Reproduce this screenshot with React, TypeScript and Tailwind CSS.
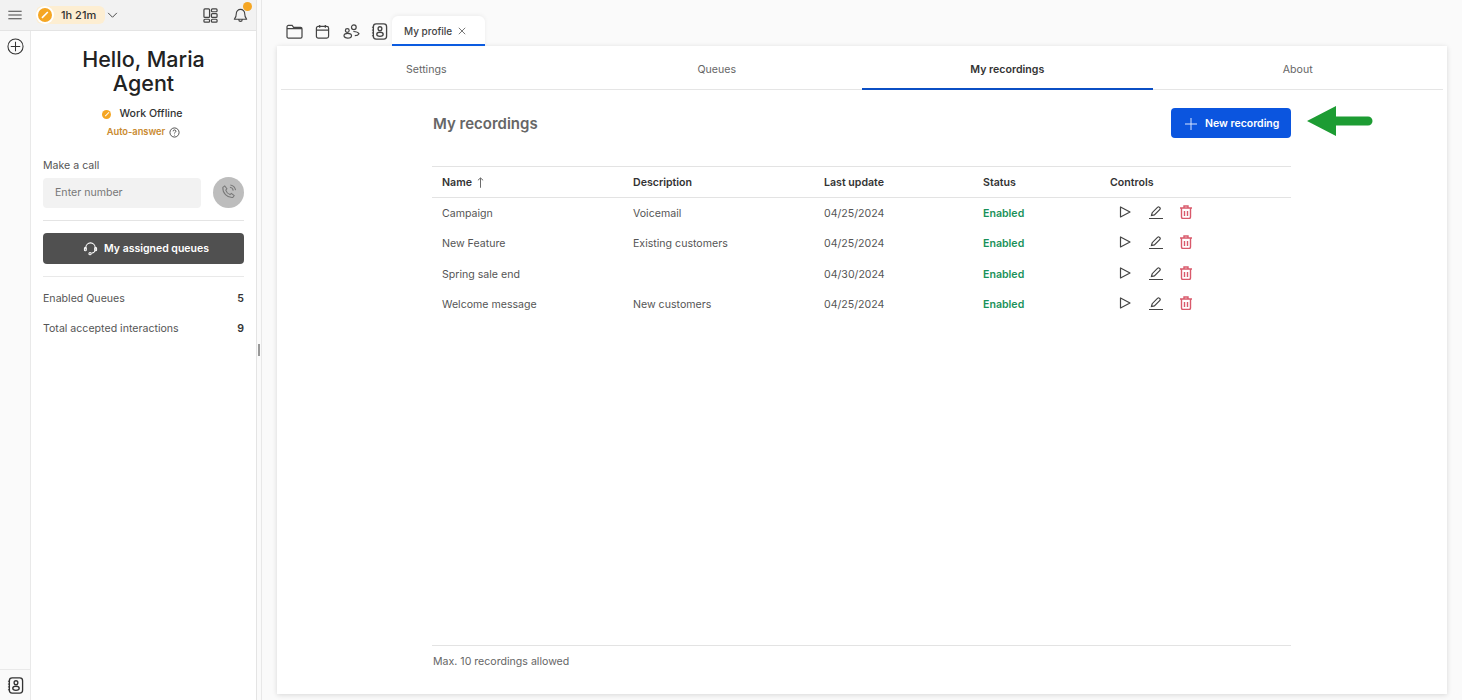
import { useState } from "react";

const ROWS = [
  { name: "Campaign", description: "Voicemail", updated: "04/25/2024" },
  { name: "New Feature", description: "Existing customers", updated: "04/25/2024" },
  { name: "Spring sale end", description: "", updated: "04/30/2024" },
  { name: "Welcome message", description: "New customers", updated: "04/25/2024" },
];

const TABS = ["Settings", "Queues", "My recordings", "About"];

function Contact({ className = "" }: { className?: string }) {
  return (
    <svg viewBox="0 0 18 18" fill="none" stroke="currentColor" strokeWidth="1.4" className={className}>
      <rect x="2.5" y="1" width="14" height="16" rx="3" />
      <circle cx="9.5" cy="6" r="2" />
      <ellipse cx="9.5" cy="12" rx="3.4" ry="2.2" />
      <path d="M1 4.5h2M1 7.5h2M1 10.5h2M1 13.5h2" strokeWidth="1" />
    </svg>
  );
}

function StatusDot({ size }: { size: string }) {
  return (
    <span className={`flex items-center justify-center rounded-full bg-[#f5a623] ${size}`}>
      <svg viewBox="0 0 10 10" className="h-[70%] w-[70%]">
        <path d="M2 8 8 2" stroke="#fff" strokeWidth="1.6" />
      </svg>
    </span>
  );
}

function Sidebar() {
  return (
    <aside className="flex h-full w-[257px] shrink-0 flex-col border-r border-[#e4e4e4] bg-white font-['Inter',sans-serif]">
      <div className="flex h-[31px] shrink-0 items-center border-b border-[#e4e4e4] bg-[#f2f2f2] pl-[8px]">
        <svg viewBox="0 0 16 12" className="h-[10px] w-[14px]" fill="none" stroke="#444" strokeWidth="1.2">
          <path d="M0 1.5h16M0 6h16M0 10.5h16" />
        </svg>
        <div className="ml-[14px] flex h-[18px] w-[69px] items-center rounded-[6px] bg-[#fdeed2]">
          <span className="flex h-[18px] w-[18px] items-center justify-center rounded-full bg-white">
            <StatusDot size="h-[14px] w-[14px]" />
          </span>
          <span className="ml-[7px] text-[11px] font-medium text-[#333]">1h 21m</span>
        </div>
        <svg viewBox="0 0 12 8" className="ml-[2px] h-[7px] w-[11px]" fill="none" stroke="#444" strokeWidth="1.1">
          <path d="M1 1l5 5 5-5" />
        </svg>
        <svg viewBox="0 0 16 16" className="ml-[85px] h-[15px] w-[15px]" fill="none" stroke="#444" strokeWidth="1.3">
          <rect x="1" y="1" width="6" height="9" rx="1" />
          <rect x="1" y="12" width="6" height="3" rx="1" />
          <rect x="9" y="1" width="6" height="3" rx="1" />
          <rect x="9" y="6" width="6" height="4" rx="1" />
          <rect x="9" y="12" width="6" height="3" rx="1" />
        </svg>
        <div className="relative ml-[15px]">
          <svg viewBox="0 0 16 16" className="h-[15px] w-[15px]" fill="none" stroke="#444" strokeWidth="1.2">
            <path d="M8 1.5a4.5 4.5 0 0 0-4.5 4.5c0 4-2 5.5-2 6h13c0-.5-2-2-2-6A4.5 4.5 0 0 0 8 1.5zM6.2 12.5a1.8 1.8 0 0 0 3.6 0" />
          </svg>
          <span className="absolute -right-[4px] -top-[6px] h-[9px] w-[9px] rounded-full bg-[#f5a623]" />
        </div>
      </div>

      <div className="flex min-h-0 flex-1">
        <div className="flex w-[31px] shrink-0 flex-col items-center justify-between border-r border-[#e9e9e9] bg-[#fafafa] pt-[7px]">
          <svg viewBox="0 0 18 18" className="h-[17px] w-[17px]" fill="none" stroke="#333" strokeWidth="1.1">
            <circle cx="9" cy="9" r="8" />
            <path d="M9 4v10M4 9h10" />
          </svg>
          <div className="flex h-[31px] w-full items-center justify-center border-t border-[#e9e9e9]">
            <Contact className="h-[17px] w-[17px] text-[#333]" />
          </div>
        </div>

        <div className="flex-1 px-[12px]">
          <h1 className="mt-[16px] text-center text-[21.5px] leading-[24px] font-medium text-[#222]">
            Hello, Maria
            <br />
            Agent
          </h1>
          <div className="mt-[11px] flex items-center justify-center gap-[8px] pr-[2px]">
            <StatusDot size="h-[9px] w-[9px]" />
            <span className="text-[10.6px] leading-[16px] font-medium text-[#333]">Work Offline</span>
          </div>
          <div className="mt-[3px] flex items-center justify-center gap-[4px]">
            <span className="text-[9.3px] leading-[14px] font-semibold text-[#c98a2f]">Auto-answer</span>
            <svg viewBox="0 0 12 12" className="h-[11px] w-[11px]" fill="none" stroke="#444" strokeWidth="1">
              <circle cx="6" cy="6" r="5" />
              <path d="M4.5 4.7a1.5 1.5 0 1 1 2.2 1.3c-.5.3-.7.5-.7 1M6 8.5v.8" />
            </svg>
          </div>

          <p className="mt-[19px] text-[10.6px] leading-[16px] text-[#555]">Make a call</p>
          <div className="mt-[3px] flex items-center justify-between">
            <div className="flex h-[30px] w-[158px] items-center rounded-[4px] bg-[#f2f2f2] pl-[12px] text-[10.6px] text-[#777]">
              Enter number
            </div>
            <span className="flex h-[31px] w-[31px] items-center justify-center rounded-full bg-[#bdbdbd]">
              <svg viewBox="0 0 18 18" className="h-[17px] w-[17px]" fill="none" stroke="#777" strokeWidth="1.1">
                <path d="M3 3.5 5 2l2.3 3-1.2 1.4c.6 2 2.500 4 4.500 4.800l1.400-1.200 3 2.300-1.500 2c-6 .5-11-5-10.500-10.800zM10.500 3.500a4 4 0 0 1 3.500 3.500M11 1a7 7 0 0 1 5.500 5.500" />
              </svg>
            </span>
          </div>
          <div className="mt-[12px] h-px bg-[#e4e4e4]" />
          <button className="mt-[12px] flex h-[31px] w-full items-center justify-center gap-[6px] rounded-[4px] bg-[#505050] pl-[5px] text-[10.5px] font-semibold text-white">
            <svg viewBox="0 0 16 16" className="h-[15px] w-[15px]" fill="none" stroke="#fff" strokeWidth="1.1">
              <path d="M3 9V7a5 5 0 0 1 10 0v2M13 9c0 2-1 3.500-4 4" />
              <rect x="1.500" y="7" width="2" height="3.500" rx="1" />
              <rect x="12.500" y="7" width="2" height="3.500" rx="1" />
              <circle cx="7.500" cy="13.500" r="1.200" />
            </svg>
            My assigned queues
          </button>
          <div className="mt-[12px] h-px bg-[#e9e9e9]" />
          <div className="mt-[14px] flex h-[16px] items-center justify-between text-[10.6px] text-[#555]">
            <span>Enabled Queues</span>
            <span className="font-semibold text-[#333]">5</span>
          </div>
          <div className="mt-[14px] flex h-[16px] items-center justify-between text-[10.6px] text-[#555]">
            <span>Total accepted interactions</span>
            <span className="font-semibold text-[#333]">9</span>
          </div>
        </div>
      </div>
    </aside>
  );
}

function MainPanel() {
  const [tab] = useState("My recordings");
  return (
    <main className="flex min-w-0 flex-1 flex-col px-[15px]">
      <div className="flex h-[46px] shrink-0 items-end">
        <div className="flex h-[29px] w-[115px] items-center gap-[12px] self-end pl-[9px] text-[#444]">
          <svg viewBox="0 0 18 16" className="h-[15px] w-[17px] shrink-0" fill="none" stroke="currentColor" strokeWidth="1.3">
            <path d="M1 3a1.500 1.500 0 0 1 1.500-1.500h4L8 3.500h7.500A1.500 1.500 0 0 1 17 5v8.500a1.500 1.500 0 0 1-1.500 1.500h-13A1.500 1.500 0 0 1 1 13.500zM1 5h16" />
          </svg>
          <svg viewBox="0 0 16 16" className="h-[15px] w-[15px] shrink-0" fill="none" stroke="currentColor" strokeWidth="1.3">
            <rect x="1.500" y="2.500" width="13" height="12.500" rx="2" />
            <path d="M1.500 6.500h13M5 1v3M11 1v3" />
          </svg>
          <svg viewBox="0 0 18 16" className="ml-[1px] h-[15px] w-[17px] shrink-0" fill="none" stroke="currentColor" strokeWidth="1.3">
            <circle cx="11.500" cy="3.500" r="2.500" />
            <circle cx="4.500" cy="7" r="2" />
            <ellipse cx="5" cy="12.500" rx="4" ry="2.500" />
            <path d="M11 8c2 0 5 .5 6 2.500-.5 1-2 2-4.500 2" />
          </svg>
          <Contact className="-ml-[1px] h-[17px] w-[17px] shrink-0" />
        </div>
        <div className="relative z-10 flex h-[30px] w-[93px] items-center rounded-t-[6px] border-b-2 border-[#0b5be0] bg-white pt-[2px] pl-[12px] text-[10px] font-medium text-[#444] shadow-[0_-1px_4px_rgba(0,0,0,0.06)]">
          My profile
          <svg viewBox="0 0 10 10" className="ml-[6px] h-[8px] w-[8px]" fill="none" stroke="#555" strokeWidth="1">
            <path d="M1 1l8 8M9 1l-8 8" />
          </svg>
        </div>
      </div>

      <section className="mb-[6px] flex min-h-0 flex-1 flex-col bg-white px-[4px] shadow-[0_1px_5px_rgba(0,0,0,0.14)]">
        <div className="grid h-[44px] shrink-0 grid-cols-4 border-b border-[#e5e5e5] text-[10.6px]">
          {TABS.map((t) => (
            <div
              key={t}
              className={
                t === tab
                  ? "-mb-px flex items-center justify-center border-b-2 border-[#0b4fc4] pt-[5px] font-semibold text-[#333]"
                  : "flex items-center justify-center pt-[5px] text-[#666]"
              }
            >
              {t}
            </div>
          ))}
        </div>

        <div className="ml-[151px] flex min-h-0 w-[859px] flex-1 flex-col">
          <div className="mt-[18px] flex h-[30px] shrink-0 items-center justify-between">
            <h2 className="pt-[3px] pl-[1px] text-[15px] font-semibold text-[#666]">My recordings</h2>
            <button className="flex h-[30px] w-[120px] items-center gap-[8px] rounded-[4px] bg-[#0b55df] pt-[1px] pl-[14px] text-[10.5px] font-semibold text-white">
              <svg viewBox="0 0 12 12" className="h-[12px] w-[12px]" fill="none" stroke="#dbe6ff" strokeWidth="1">
                <path d="M6 0v12M0 6h12" />
              </svg>
              New recording
            </button>
          </div>

          <table className="mt-[28px] w-full table-fixed text-left text-[10.6px]">
            <thead>
              <tr className="h-[31px] border-y border-[#e3e3e3] font-semibold text-[#333]">
                <th className="w-[191px] pt-[2px] pl-[10px] font-semibold">
                  <span className="flex items-center gap-[5px]">
                    Name
                    <svg viewBox="0 0 8 12" className="h-[11px] w-[7px]" fill="none" stroke="#444" strokeWidth="0.9">
                      <path d="M4 12V1M1 3.500 4 .8l3 2.700" />
                    </svg>
                  </span>
                </th>
                <th className="w-[191px] pt-[2px] pl-[10px] font-semibold">Description</th>
                <th className="w-[159px] pt-[2px] pl-[10px] font-semibold">Last update</th>
                <th className="w-[127px] pt-[2px] pl-[10px] font-semibold">Status</th>
                <th className="pt-[2px] pl-[10px] font-semibold">Controls</th>
              </tr>
            </thead>
            <tbody className="text-[#555]">
              {ROWS.map((r) => (
                <tr key={r.name} className="h-[30.500px]">
                  <td className="pt-[2px] pl-[10px]">{r.name}</td>
                  <td className="pt-[2px] pl-[10px]">{r.description}</td>
                  <td className="pt-[2px] pl-[10px]">{r.updated}</td>
                  <td className="pt-[2px] pl-[10px] font-semibold text-[#19915a]">Enabled</td>
                  <td className="pl-[10px]">
                    <div className="-mt-[2px] flex items-center gap-[16.500px] pl-[8px]">
                      <svg viewBox="0 0 14 14" className="h-[14px] w-[14px]" fill="none" stroke="#444" strokeWidth="1.2">
                        <path d="M2.500 2v10l9.500-5z" strokeLinejoin="round" />
                      </svg>
                      <svg viewBox="0 0 14 14" className="h-[14px] w-[14px]" fill="none" stroke="#444" strokeWidth="1.2">
                        <path d="M2.500 10.500l.7-2.800 5.500-5.500a1.100 1.100 0 0 1 1.600 0l.6.600a1.100 1.100 0 0 1 0 1.600l-5.500 5.500zM0 13.500h14" />
                      </svg>
                      <svg viewBox="0 0 14 14" className="h-[14px] w-[14px]" fill="none" stroke="#d9596b" strokeWidth="1.4">
                        <path d="M1 3h12M2.500 3v9a1.500 1.500 0 0 0 1.500 1.500h6A1.500 1.500 0 0 0 11.500 12V3M5 3V1h4v2M5.500 6v5M8.500 6v5" />
                      </svg>
                    </div>
                  </td>
                </tr>
              ))}
            </tbody>
          </table>

          <div className="mt-auto mb-[24px] flex h-[25px] shrink-0 items-end border-t border-[#e3e3e3] pl-[1px] text-[10.6px] text-[#666]">
            Max. 10 recordings allowed
          </div>
        </div>
      </section>
    </main>
  );
}

export default function App() {
  return (
    <div className="relative flex h-[700px] w-[1462px] overflow-hidden bg-[#fafafa] font-['Inter',sans-serif]">
      <Sidebar />
      <div className="relative flex w-[5px] shrink-0 items-center justify-center border-r border-[#e8e8e8]">
        <span className="absolute top-[344px] left-[1px] h-[12px] w-[2px] bg-[#999]" />
      </div>
      <MainPanel />
      {/* green callout arrow over the page */}
      <svg viewBox="0 0 66 30" className="absolute top-[106px] left-[1307px] h-[30px] w-[66px]">
        <path d="M0 15 29 0v10.500h32a4.500 4.500 0 0 1 0 9H29V30z" fill="#1d9c33" />
      </svg>
    </div>
  );
}
